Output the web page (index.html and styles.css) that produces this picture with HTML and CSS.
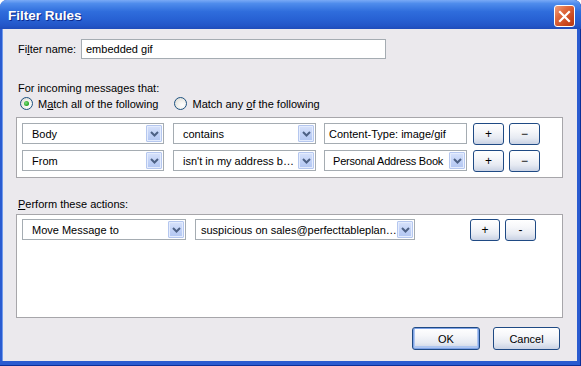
FILE: index.html
```html
<!DOCTYPE html>
<html>
<head>
<meta charset="utf-8">
<link rel="stylesheet" href="styles.css">
</head>
<body>
<div class="window">
  <div class="titlebar">
    <span class="title">Filter Rules</span>
    <span class="close"><svg width="13" height="13" viewBox="0 0 13 13"><path d="M2 2 L11 11 M11 2 L2 11" stroke="#fff" stroke-width="2.2" stroke-linecap="square"/></svg></span>
  </div>
  <div class="client">
    <div class="name-row">
      <span class="lbl">Fi<u>l</u>ter name:</span>
      <div class="textbox name-box">embedded gif</div>
    </div>
    <div class="section-label">For incoming messages that:</div>
    <div class="radios">
      <span class="radio checked"><span class="dot"></span></span><span class="rtext">M<u>a</u>tch all of the following</span>
      <span class="radio r2"></span><span class="rtext">Match any <u>o</u>f the following</span>
    </div>
    <div class="box rules">
      <div class="row">
        <div class="combo w142"><span class="ctext">Body</span><span class="cbtn"><svg width="9" height="6" viewBox="0 0 9 6"><path d="M1 1 L4.5 4.5 L8 1" fill="none" stroke="#4d6185" stroke-width="2"/></svg></span></div>
        <div class="combo w143 ml9"><span class="ctext">contains</span><span class="cbtn"><svg width="9" height="6" viewBox="0 0 9 6"><path d="M1 1 L4.5 4.5 L8 1" fill="none" stroke="#4d6185" stroke-width="2"/></svg></span></div>
        <div class="textbox field ml8">Content-Type: image/gif</div>
        <div class="btn small ml6">+</div>
        <div class="btn small ml5">&minus;</div>
      </div>
      <div class="row">
        <div class="combo w142"><span class="ctext">From</span><span class="cbtn"><svg width="9" height="6" viewBox="0 0 9 6"><path d="M1 1 L4.5 4.5 L8 1" fill="none" stroke="#4d6185" stroke-width="2"/></svg></span></div>
        <div class="combo w143 ml9"><span class="ctext">isn't in my address b…</span><span class="cbtn"><svg width="9" height="6" viewBox="0 0 9 6"><path d="M1 1 L4.5 4.5 L8 1" fill="none" stroke="#4d6185" stroke-width="2"/></svg></span></div>
        <div class="combo w143 ml8"><span class="ctext book">Personal Address Book</span><span class="cbtn"><svg width="9" height="6" viewBox="0 0 9 6"><path d="M1 1 L4.5 4.5 L8 1" fill="none" stroke="#4d6185" stroke-width="2"/></svg></span></div>
        <div class="btn small ml6">+</div>
        <div class="btn small ml5">&minus;</div>
      </div>
    </div>
    <div class="section-label perform"><u>P</u>erform these actions:</div>
    <div class="box actions">
      <div class="row">
        <div class="combo w164"><span class="ctext">Move Message to</span><span class="cbtn"><svg width="9" height="6" viewBox="0 0 9 6"><path d="M1 1 L4.5 4.5 L8 1" fill="none" stroke="#4d6185" stroke-width="2"/></svg></span></div>
        <div class="combo w220 ml9"><span class="ctext tight">suspicious on sales@perfecttableplan…</span><span class="cbtn"><svg width="9" height="6" viewBox="0 0 9 6"><path d="M1 1 L4.5 4.5 L8 1" fill="none" stroke="#4d6185" stroke-width="2"/></svg></span></div>
        <div class="btn small s30 ml55">+</div>
        <div class="btn small ml5">-</div>
      </div>
    </div>
    <div class="footer">
      <div class="btn big default">OK</div>
      <div class="btn big cancel">Cancel</div>
    </div>
  </div>
</div>
</body>
</html>
```
FILE: styles.css
```css
html, body {
  margin: 0;
  padding: 0;
  background: #ffffff;
}
body {
  font-family: "Liberation Sans", Arial, sans-serif;
  font-size: 11px;
  color: #000;
}
.window {
  width: 581px;
  height: 366px;
  display: flex;
  flex-direction: column;
  background: #2a5bd0;
  border-radius: 7px 7px 0 0;
  box-sizing: border-box;
  box-shadow: inset 0 -1px 0 #0b2f99, inset -1px 0 0 #0b2f99;
}
.titlebar {
  height: 29px;
  flex: none;
  display: flex;
  align-items: center;
  padding: 0 6px 0 8px;
  border-radius: 7px 7px 0 0;
  background: linear-gradient(#7aaaf6 0%, #4f8cec 12%, #2f6ddc 40%, #2862d4 65%, #2356c8 88%, #1f4cba 100%);
}
.title {
  flex: 1;
  color: #fff;
  font-weight: bold;
  font-size: 13.5px;
  text-shadow: 1px 1px 0 #0c2a8c;
  margin-top: 1px;
}
.close {
  width: 21px;
  height: 22px;
  box-sizing: border-box;
  border: 1px solid #fff;
  border-radius: 3px;
  background: linear-gradient(135deg, #f0a07e 0%, #e06a3e 35%, #c8451c 75%, #b53a14 100%);
  display: flex;
  align-items: center;
  justify-content: center;
  margin-top: 3px;
}
.client {
  flex: 1;
  margin: 0 4px 5px 3px;
  background: #ebe9ed;
  padding: 0 14px 0 13px;
  display: flex;
  flex-direction: column;
  box-shadow: -1px 0 0 #6f9aec;
}
u { text-decoration: underline; text-underline-offset: 1px; }
.name-row {
  display: flex;
  align-items: center;
  margin-top: 10px;
}
.lbl { margin-left: 2px; width: 63px; }
.textbox {
  height: 20px;
  box-sizing: border-box;
  background: #fff;
  border: 1px solid #a5acb2;
  display: flex;
  align-items: center;
  padding-left: 4px;
  white-space: nowrap;
  overflow: hidden;
}
.name-box { width: 305px; }
.section-label {
  height: 13px;
  line-height: 13px;
  margin-top: 23px;
  margin-left: 2px;
}
.radios {
  display: flex;
  align-items: center;
  height: 13px;
  margin-top: 2px;
  margin-left: 4px;
}
.radio {
  width: 13px;
  height: 13px;
  box-sizing: border-box;
  border: 1px solid #1c5180;
  border-radius: 50%;
  background: radial-gradient(circle at 65% 65%, #ffffff 0%, #f2f2ee 40%, #d7d6cf 100%);
  display: flex;
  align-items: center;
  justify-content: center;
}
.dot {
  width: 5px;
  height: 5px;
  border-radius: 50%;
  background: radial-gradient(circle at 40% 40%, #7ee07e, #21a121 70%);
}
.rtext { margin-left: 5px; }
.r2 { margin-left: 16px; }
.box {
  background: #fff;
  border: 1px solid #a7a6aa;
  box-sizing: border-box;
}
.rules {
  height: 61px;
  margin-top: 7px;
  padding: 5px 0 0 5px;
  display: flex;
  flex-direction: column;
  gap: 6px;
}
.row {
  display: flex;
  align-items: center;
  height: 21px;
}
.combo {
  height: 21px;
  box-sizing: border-box;
  border: 1px solid #a5acb2;
  background: #fff;
  display: flex;
  align-items: center;
}
.ctext {
  flex: 1;
  padding-left: 9px;
  white-space: nowrap;
  overflow: hidden;
}
.ctext.tight { padding-left: 5px; }
.ctext.book { padding-left: 8px; letter-spacing: -0.2px; }
.cbtn {
  width: 16px;
  height: 17px;
  margin: 0 1px;
  box-sizing: border-box;
  border: 1px solid #b5c7ef;
  border-radius: 1px;
  background: linear-gradient(#d7e2fb, #bfd0f6 60%, #b2c6f1);
  box-shadow: inset 0 0 0 1px #e4ecfd;
  display: flex;
  align-items: center;
  justify-content: center;
}
.w142 { width: 142px; }
.w143 { width: 143px; }
.w164 { width: 164px; }
.w220 { width: 220px; }
.field { width: 143px; height: 21px; }
.ml5 { margin-left: 5px; }
.ml6 { margin-left: 6px; }
.ml8 { margin-left: 8px; }
.ml9 { margin-left: 9px; }
.ml55 { margin-left: 55px; }
.btn {
  box-sizing: border-box;
  border: 1px solid #1f4a84;
  border-radius: 3px;
  background: linear-gradient(#ffffff 0%, #f6f7fa 35%, #e6eaf2 70%, #c9d2e4 100%);
  display: flex;
  align-items: center;
  justify-content: center;
  font-size: 12px;
}
.small { width: 31px; height: 22px; }
.s30 { width: 30px; }
.perform { margin-top: 20px; }
.actions {
  height: 104px;
  margin-top: 3px;
  padding: 4px 0 0 5px;
}
.footer {
  display: flex;
  justify-content: flex-end;
  margin-top: 9px;
  padding-right: 3px;
  gap: 13px;
}
.big { height: 23px; font-size: 11px; }
.default { width: 68px; box-shadow: inset 0 0 0 1px #7fa3e6, inset 0 -1px 0 2px #aec6f0; }
.cancel { width: 67px; }
```
